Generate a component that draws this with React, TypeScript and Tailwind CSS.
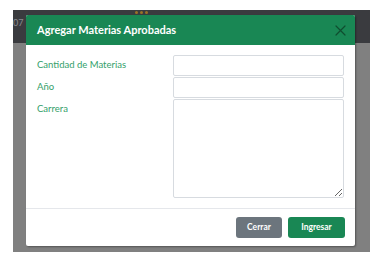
import React from "react";

export default function App() {
  return (
    <div className="w-[380px] h-[267px] bg-white pt-[10px] pl-[13px]" style={{ fontFamily: "Lato, 'Open Sans', sans-serif" }}>
      <div className="relative w-[357px] h-[242px] bg-[#808080] flex flex-col">
        <div className="h-[33px] bg-[#3a3b3f] flex items-start">
          <span className="text-[9px] text-[#8a8b90] leading-none mt-[8px]">07</span>
          <div className="ml-[112px] flex gap-[2px] mt-[1px]">
            <span className="w-[3px] h-[3px] rounded-full bg-[#9a7228]" />
            <span className="w-[3px] h-[3px] rounded-full bg-[#9a7228]" />
            <span className="w-[3px] h-[3px] rounded-full bg-[#9a7228]" />
          </div>
        </div>
        <div className="flex-1" />
        <div className="absolute left-[13px] top-[5px] w-[329px] h-[231px] bg-white rounded-[2px] shadow-[1px_1px_2px_rgba(0,0,0,0.35)] flex flex-col overflow-hidden">
          <div className="h-[30px] bg-[#198754] flex items-center justify-between pl-[11px] pr-[9px]">
            <span className="text-white font-bold text-[11px]">Agregar Materias Aprobadas</span>
            <svg width="11" height="11" viewBox="0 0 11 11">
              <path d="M1 1 L10 10 M10 1 L1 10" stroke="#0f4d2f" strokeWidth="1.2" strokeLinecap="round" />
            </svg>
          </div>
          <div className="flex pt-[10px] pb-[10px] pl-[11px] pr-[11px] border-b border-[#e5e7eb]">
            <div className="w-[136px] shrink-0 flex flex-col gap-[1px] text-[9.5px] text-[#34a06a]">
              <div className="h-[21px] flex items-center">Cantidad de Materias</div>
              <div className="h-[21px] flex items-center">Año</div>
              <div className="h-[21px] flex items-center">Carrera</div>
            </div>
            <div className="flex-1 min-w-0 flex flex-col gap-[1px]">
              <input className="w-full h-[21px] border border-[#d7dbe0] rounded-[2px] outline-none" />
              <input className="w-full h-[21px] border border-[#d7dbe0] rounded-[2px] outline-none" />
              <textarea className="w-full h-[99px] border border-[#d7dbe0] rounded-[2px] outline-none block" />
            </div>
          </div>
          <div className="flex-1 flex items-center justify-end gap-[6px] pr-[10px]">
            <button className="h-[21px] w-[46px] bg-[#6c757d] text-white text-[8.5px] font-bold rounded-[3px]">Cerrar</button>
            <button className="h-[21px] w-[57px] bg-[#198754] text-white text-[8.5px] font-bold rounded-[3px]">Ingresar</button>
          </div>
        </div>
      </div>
    </div>
  );
}
